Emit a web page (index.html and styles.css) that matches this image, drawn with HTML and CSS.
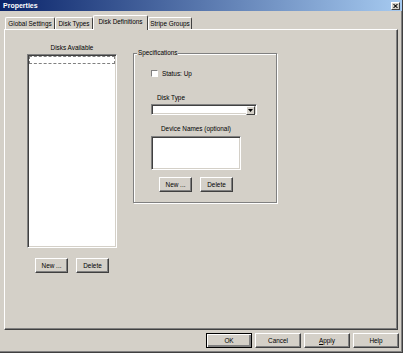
FILE: index.html
```html
<!DOCTYPE html>
<html lang="en">
<head>
    <meta charset="UTF-8">
    <title>Properties</title>
    <link rel="stylesheet" href="styles.css">
</head>
<body>
    <div class="window">
        <div class="titlebar">
            <span class="title">Properties</span>
            <span class="close">
                <svg width="5" height="4" viewBox="0 0 5 4"><path d="M0 0h1l1.5 1.2L4 0h1L3.2 2 5 4H4L2.5 2.8 1 4H0l1.8-2z" fill="#000"/></svg>
            </span>
        </div>

        <div class="tabs">
            <div class="tab tab-global">Global Settings</div>
            <div class="tab tab-types">Disk Types</div>
            <div class="tab tab-defs active">Disk Definitions</div>
            <div class="tab tab-stripe">Stripe Groups</div>
        </div>

        <div class="panel">
            <div class="disks">
                <div class="caption">Disks Available</div>
                <div class="listbox">
                    <div class="focus-item"></div>
                </div>
                <div class="btn-row">
                    <button class="btn small">New ...</button>
                    <button class="btn small">Delete</button>
                </div>
            </div>

            <div class="group">
                <span class="group-title">Specifications</span>
                <div class="check-row">
                    <span class="checkbox"></span>
                    <span>Status: Up</span>
                </div>
                <div class="field-label">Disk Type</div>
                <div class="combo">
                    <span class="combo-btn">
                        <svg width="5" height="3" viewBox="0 0 5 3"><path d="M0 0h5L2.5 3z" fill="#000"/></svg>
                    </span>
                </div>
                <div class="names">
                    <div class="caption">Device Names (optional)</div>
                    <div class="textbox"></div>
                    <div class="btn-row">
                        <button class="btn small">New ...</button>
                        <button class="btn small">Delete</button>
                    </div>
                </div>
            </div>
        </div>

        <div class="footer">
            <button class="btn wide default">OK</button>
            <button class="btn wide">Cancel</button>
            <button class="btn wide"><u>A</u>pply</button>
            <button class="btn wide">Help</button>
        </div>
    </div>
</body>
</html>
```

FILE: styles.css
```css
* {
    box-sizing: border-box;
}
body {
    margin: 0;
    background-color: #d4d0c8;
    font-family: "Liberation Sans", Arial, sans-serif;
    font-size: 6.4px;
    color: #000;
}
.window {
    width: 403px;
    height: 353px;
    border-right: 1px solid #404040;
    border-bottom: 1px solid #404040;
    box-shadow: inset -1px -1px 0 #808080;
}
.titlebar {
    height: 11px;
    display: flex;
    align-items: center;
    justify-content: space-between;
    padding: 0 2px 0 3px;
    background: linear-gradient(to right, #0a246a, #a6caf0);
}
.title {
    color: #fff;
    font-weight: bold;
    font-size: 7px;
}
.close {
    width: 9px;
    height: 8px;
    display: flex;
    align-items: center;
    justify-content: center;
    background-color: #d4d0c8;
    border: 1px solid;
    border-color: #fff #404040 #404040 #fff;
}

/* tabs */
.tabs {
    display: flex;
    align-items: flex-end;
    height: 14px;
    margin: 4px 0 0 5px;
}
.tab {
    height: 12px;
    line-height: 11px;
    text-align: center;
    border: 1px solid;
    border-color: #fff #404040 transparent #fff;
    border-bottom: none;
    border-radius: 2px 2px 0 0;
    white-space: nowrap;
}
.tab-global { width: 50px; }
.tab-types { width: 38px; }
.tab-defs { width: 55px; }
.tab-stripe { width: 44px; }
.tab.active {
    height: 15px;
    margin-bottom: -1px;
    line-height: 12px;
    position: relative;
    z-index: 1;
    background-color: #d4d0c8;
}

/* main panel */
.panel {
    display: flex;
    align-items: flex-start;
    width: 394px;
    height: 301px;
    margin-left: 4px;
    padding: 14px 0 0 22px;
    border: 1px solid;
    border-color: #fff #404040 #404040 #fff;
    box-shadow: inset -1px -1px 0 #808080;
}
.caption {
    line-height: 8px;
    height: 8px;
    text-align: center;
    white-space: nowrap;
}
.disks {
    width: 90px;
}
.disks .caption {
    margin-bottom: 2px;
}
.listbox,
.textbox,
.combo {
    background-color: #fff;
    border: 1px solid;
    border-color: #808080 #fff #fff #808080;
    box-shadow: inset 1px 1px 0 #404040, inset -1px -1px 0 #d4d0c8;
}
.listbox {
    height: 194px;
    padding: 1px 1px 0 1px;
}
.focus-item {
    height: 8px;
    border: 1px dashed #808080;
}
.btn-row {
    display: flex;
    justify-content: center;
    gap: 8px;
}
.disks .btn-row {
    margin-top: 10px;
}

/* buttons */
.btn {
    height: 15px;
    padding: 0;
    font-family: inherit;
    font-size: 6.4px;
    color: #000;
    background-color: #d4d0c8;
    border: 1px solid;
    border-color: #fff #404040 #404040 #fff;
    box-shadow: inset -1px -1px 0 #808080;
    border-radius: 0;
}
.btn.small {
    width: 33px;
}
.btn.wide {
    width: 46px;
}
.btn.default {
    border-color: #000;
    box-shadow: inset 1px 1px 0 #fff, inset -2px -2px 0 #808080;
}

/* specifications group */
.group {
    position: relative;
    width: 144px;
    height: 150px;
    margin: 9px 0 0 16px;
    padding: 16px 0 0 17px;
    border: 1px solid #808080;
    box-shadow: inset 1px 1px 0 #fff, 1px 1px 0 #fff;
}
.group-title {
    position: absolute;
    top: -5px;
    left: 3px;
    padding: 0 1px;
    line-height: 8px;
    background-color: #d4d0c8;
}
.check-row {
    display: flex;
    align-items: center;
    gap: 4px;
    height: 7px;
}
.checkbox {
    width: 7px;
    height: 7px;
    background-color: #fff;
    border: 1px solid;
    border-color: #808080 #fff #fff #808080;
}
.field-label {
    margin-top: 17px;
    padding-left: 6px;
    line-height: 8px;
}
.combo {
    display: flex;
    justify-content: flex-end;
    width: 106px;
    height: 11px;
    margin-top: 2px;
    padding: 1px;
}
.combo-btn {
    width: 9px;
    height: 9px;
    display: flex;
    align-items: center;
    justify-content: center;
    background-color: #d4d0c8;
    border: 1px solid;
    border-color: #fff #404040 #404040 #fff;
}
.names {
    width: 90px;
    margin-top: 10px;
}
.names .caption {
    margin-bottom: 3px;
}
.textbox {
    height: 34px;
}
.names .btn-row {
    margin-top: 7px;
}

/* dialog buttons */
.footer {
    display: flex;
    justify-content: flex-end;
    gap: 3px;
    margin-top: 3px;
    padding-right: 3px;
}
```
